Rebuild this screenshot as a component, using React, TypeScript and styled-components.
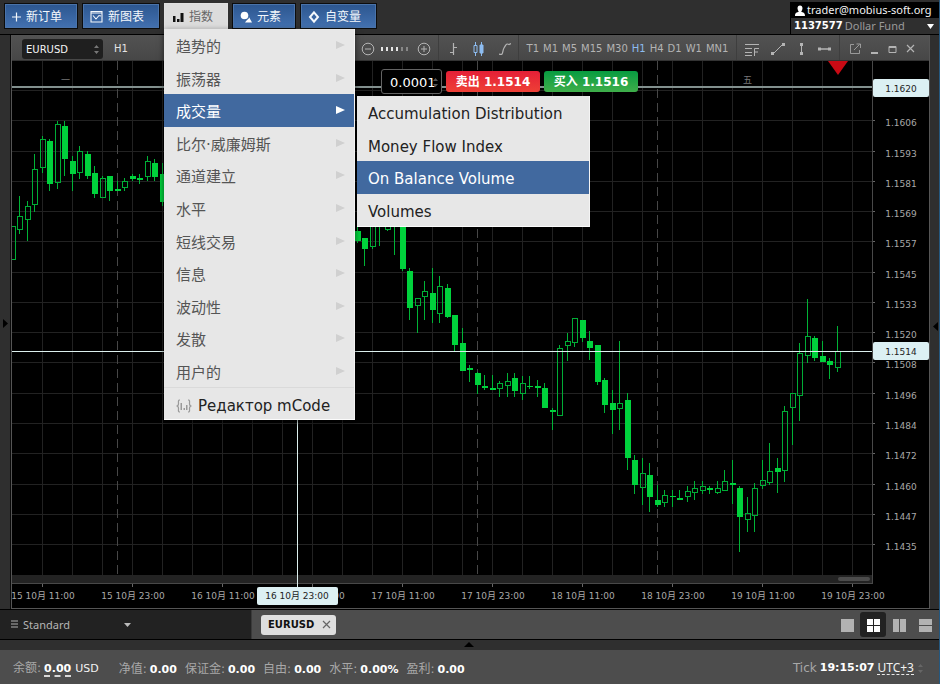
import React from "react";
import styled, { createGlobalStyle, css } from "styled-components";

const wide = `"DejaVu Sans", "Noto Sans CJK SC", sans-serif`;
const narrow = `"Noto Sans", "Noto Sans CJK SC", sans-serif`;

const GlobalStyle = createGlobalStyle`
  * { box-sizing: border-box; }
  html, body { margin: 0; background: #2f2f2f; }
  body { font-family: ${wide}; }
  button, input, select { font-family: inherit; margin: 0; }
  svg { display: block; flex: none; }
`;

const Page = styled.div`
  display: flex;
  flex-direction: column;
  height: 100vh;
  min-height: 480px;
  overflow: hidden;
  border-right: 1px solid #25587f;
  background: #2f2f2f;
`;

/* ---------- header ---------- */

const Header = styled.header`
  display: flex;
  align-items: flex-start;
  height: 35px;
  padding: 3px 0 0 4px;
  border-bottom: 1px solid #000;
  gap: 4px;
`;

const NavSlot = styled.div`
  position: relative;
`;

const NavButton = styled.button<{ $active?: boolean; $width: number }>`
  display: flex;
  align-items: center;
  gap: 5px;
  width: ${(p) => p.$width}px;
  height: 26px;
  padding: 1px 0 0 7px;
  border: 1px solid #0c0c0c;
  box-shadow: inset 0 0 0 1px #4a73a9;
  background: linear-gradient(#2c568f, #4371b0);
  color: #f4f8fc;
  font-size: 12px;
  line-height: 16px;
  white-space: nowrap;
  ${(p) =>
    p.$active &&
    css`
      border-color: #e0e0e0;
      background: #dcdcdc;
      box-shadow: none;
      color: #666;
    `}
`;

const Account = styled.section`
  margin: -1px 0 0 auto;
  width: 149px;
  border-left: 1px solid #000;
  font-family: ${narrow};
  font-size: 11px;
  line-height: 16px;
`;

const AccountUser = styled.div`
  display: flex;
  align-items: center;
  gap: 2px;
  height: 16px;
  padding-left: 4px;
  background: #000;
  color: #f2f2f2;
`;

const AccountFund = styled.button`
  display: flex;
  align-items: center;
  gap: 2px;
  width: 100%;
  height: 16px;
  padding: 0 5px 0 3px;
  border: 0;
  background: none;
  color: #9a9a9a;
  font-family: ${narrow};
  font-size: 11px;
  line-height: 16px;
  b { color: #fff; font-family: ${wide}; font-size: 10px; }
  svg { margin-left: auto; }
`;

/* ---------- menus ---------- */

const Menu = styled.div`
  position: absolute;
  z-index: 5;
  top: 26px;
  left: 0;
  width: 191px;
  background: #e7e7e7;
  border-right: 1px solid #f4f4f4;
  border-bottom: 1px solid #fbfbfb;
  box-shadow: 0 2px 6px rgba(0, 0, 0, 0.6);
`;

const MenuList = styled.ul<{ $height: number }>`
  display: grid;
  grid-auto-rows: 1fr;
  height: ${(p) => p.$height}px;
  margin: 0;
  padding: 0;
  list-style: none;
`;

const MenuRow = styled.li`
  position: relative;
  display: flex;
`;

const MenuButton = styled.button<{ $selected?: boolean; $soft?: boolean }>`
  display: flex;
  flex: 1;
  align-items: center;
  justify-content: space-between;
  padding: 4px 9px 0 12px;
  border: 0;
  background: ${(p) => (p.$selected ? "#41699f" : "transparent")};
  color: ${(p) => (p.$selected ? "#fff" : p.$soft ? "#555" : "#222")};
  font-size: 15px;
  line-height: 20px;
  text-align: left;
  white-space: nowrap;
  svg { margin-top: -4px; }
`;

const SubMenu = styled.div`
  position: absolute;
  top: 2px;
  left: 193px;
  width: 233px;
  background: #e7e7e7;
  border-right: 1px solid #f4f4f4;
  border-bottom: 1px solid #fbfbfb;
`;

const SubButton = styled(MenuButton)`
  padding-left: 11px;
`;

const EditorButton = styled(MenuButton)`
  width: 100%;
  height: 32px;
  justify-content: flex-start;
  gap: 6px;
  border-top: 1px solid #dadada;
  svg { margin-top: 0; }
`;

/* ---------- workspace ---------- */

const Workspace = styled.main`
  display: flex;
  flex: 1;
  min-height: 0;
  border-bottom: 1px solid #000;
`;

const SideHandle = styled.button<{ $side: "left" | "right" }>`
  display: flex;
  align-items: center;
  justify-content: ${(p) => (p.$side === "left" ? "flex-start" : "flex-end")};
  width: ${(p) => (p.$side === "left" ? 11 : 9)}px;
  padding: ${(p) => (p.$side === "left" ? "2px 0 0 3px" : "8px 1px 0 0")};
  border: 0;
  border-right: ${(p) => (p.$side === "left" ? "1px solid #0a0a0a" : "0")};
  background: #2f2f2f;
`;

const ChartPanel = styled.section`
  display: flex;
  flex: 1;
  flex-direction: column;
  min-width: 0;
  border: 1px solid #555;
  border-top: 0;
  background: #000;
`;

const ChartToolbar = styled.div`
  display: flex;
  height: 26px;
  background: linear-gradient(#525252, #474747);
  border-bottom: 1px solid #333;
`;

const SymbolField = styled.label`
  position: relative;
  display: flex;
  align-items: center;
  align-self: center;
  margin: 3px 11px 0 10px;
  width: 81px;
  height: 20px;
  svg { position: absolute; right: 3px; }
`;

const SymbolSelect = styled.select`
  appearance: none;
  width: 100%;
  height: 100%;
  padding: 0 16px 0 4px;
  border: 0;
  border-radius: 3px;
  background: #1f1f1f;
  color: #f5f5f5;
  font-size: 10px;
`;

const FrameLabel = styled.span`
  align-self: center;
  padding-top: 2px;
  color: #e4e4e4;
  font-size: 10px;
`;

const Tools = styled.div<{ $width: number; $first?: boolean; $gap: number; $nudge?: string }>`
  display: flex;
  align-items: center;
  justify-content: center;
  gap: ${(p) => p.$gap}px;
  width: ${(p) => p.$width}px;
  padding: ${(p) => p.$nudge ?? "2px 0 0"};
  margin-left: ${(p) => (p.$first ? "auto" : "0")};
  border-left: ${(p) => (p.$first ? "0" : "1px solid #3e3e3e")};
`;

const ToolButton = styled.button<{ $on?: boolean }>`
  padding: 0;
  border: 0;
  background: none;
  color: ${(p) => (p.$on ? "#8dbcf0" : "#b4b4b4")};
  font-size: 10px;
  line-height: 14px;
`;

const ChartArea = styled.div`
  position: relative;
  flex: 1;
  min-height: 0;
`;

const ChartSvg = styled.svg`
  width: 100%;
  height: 100%;
  font-family: ${wide};
`;

const Trade = styled.div`
  position: absolute;
  top: 8px;
  left: 369px;
  display: flex;
  align-items: center;
  gap: 4px;
`;

const VolumeField = styled.label`
  position: relative;
  display: flex;
  align-items: center;
  svg { position: absolute; right: 3px; }
`;

const VolumeInput = styled.input`
  width: 61px;
  height: 25px;
  padding: 1px 0 0 8px;
  border: 1px solid #636363;
  border-radius: 3px;
  background: #000;
  color: #fff;
  font-size: 13px;
`;

const DealButton = styled.button<{ $buy?: boolean }>`
  width: 94px;
  height: 21px;
  padding: 1px 0 0;
  border: 0;
  border-radius: 3px;
  background: ${(p) =>
    p.$buy ? "linear-gradient(#079c41, #3fae4a)" : "linear-gradient(#e51f37, #ee4036)"};
  color: #fff;
  font-size: 12px;
  font-weight: 700;
  line-height: 20px;
  white-space: nowrap;
`;

/* ---------- bottom bars ---------- */

const TabBar = styled.div`
  display: flex;
  height: 30px;
  border-bottom: 1px solid #000;
  background: #4d4d4d;
`;

const LayoutPicker = styled.button`
  display: flex;
  align-items: center;
  width: 252px;
  padding: 0 0 0 11px;
  border: 0;
  border-right: 1px solid #3a3a3a;
  background: #222;
  color: #b5b5b5;
  font-family: ${narrow};
  font-size: 11px;
  span { width: 105px; padding-left: 4px; text-align: left; }
`;

const ChartTab = styled.div`
  display: flex;
  align-items: center;
  justify-content: space-between;
  align-self: center;
  width: 75px;
  height: 20px;
  margin-left: 9px;
  padding: 0 5px 0 7px;
  border-radius: 3px;
  background: #dedede;
  color: #111;
  font-size: 10px;
  font-weight: 700;
`;

const PlainButton = styled.button`
  padding: 0;
  border: 0;
  background: none;
`;

const Grids = styled.div`
  display: flex;
  align-items: center;
  margin-left: auto;
  padding: 0 1px 0 0;
`;

const GridButton = styled.button<{ $on?: boolean }>`
  display: flex;
  align-items: center;
  justify-content: center;
  width: 26px;
  height: 25px;
  padding: 2px 0 0;
  border: 0;
  border-radius: 3px;
  background: ${(p) => (p.$on ? "#222" : "transparent")};
  color: ${(p) => (p.$on ? "#fff" : "#b2b2b2")};
`;

const Drawer = styled.button`
  display: flex;
  justify-content: center;
  height: 10px;
  padding: 2px 2px 0 0;
  border: 0;
  background: #2f2f2f;
`;

const Status = styled.footer`
  display: flex;
  align-items: center;
  height: 34px;
  padding: 1px 15px 0 13px;
  background: #4d4d4d;
  color: #a8a8a8;
  font-size: 12px;
  white-space: nowrap;
`;

const Metric = styled.div<{ $gap: number }>`
  display: flex;
  align-items: baseline;
  gap: 3px;
  margin-right: ${(p) => p.$gap}px;
  b { color: #fff; font-size: 11px; font-weight: 700; line-height: 12px; }
  small { color: #f2f2f2; font-size: 11px; margin-left: 1px; }
`;

const Dashed = styled.b`
  border-bottom: 2px dashed #d8d8d8;
`;

const Clock = styled.div`
  display: flex;
  align-items: center;
  gap: 3px;
  margin-left: auto;
  b { color: #fff; font-size: 11px; font-weight: 700; }
`;

const Zone = styled.button`
  display: flex;
  align-items: center;
  padding: 0;
  border: 0;
  border-bottom: 1px dashed #e8e8e8;
  background: none;
  color: #f2f2f2;
  font-family: ${narrow};
  font-size: 12px;
  line-height: 13px;
`;

/* ---------- icons ---------- */

type TriProps = { w: number; h: number; dir: "up" | "down" | "left" | "right"; color: string };
function Triangle({ w, h, dir, color }: TriProps) {
  const pts = {
    up: `0,${h} ${w},${h} ${w / 2},0`,
    down: `0,0 ${w},0 ${w / 2},${h}`,
    left: `${w},0 ${w},${h} 0,${h / 2}`,
    right: `0,0 ${w},${h / 2} 0,${h}`,
  }[dir];
  return (
    <svg width={w} height={h} aria-hidden="true">
      <polygon points={pts} fill={color} />
    </svg>
  );
}

function Spinner({ color = "#777" }: { color?: string }) {
  return (
    <svg width="7" height="12" aria-hidden="true">
      <path d="M1 5L3.5 2L6 5zM1 8L3.5 11L6 8z" fill={color} />
    </svg>
  );
}

const Stroke = ({ w = 14, h = 14, children }: { w?: number; h?: number; children: React.ReactNode }) => (
  <svg width={w} height={h} viewBox={`0 0 ${w} ${h}`} fill="none" stroke="currentColor" aria-hidden="true">
    {children}
  </svg>
);

const PlusIcon = () => <Stroke w={9} h={10}><path d="M4.5 .5v9M0 5h9" strokeWidth="1.2" /></Stroke>;
const ChartIcon = () => (
  <Stroke w={13} h={13}>
    <path d="M1 1.5h11v10.500h-11z" strokeWidth="1.1" />
    <path d="M3 5.500l3 3.500L9 5.500l2 .5M1 3h11" strokeWidth="1.1" />
  </Stroke>
);
const BarsIcon = () => (
  <svg width="12" height="12" aria-hidden="true">
    <path d="M1 5h2.500v6H1zM5 8h2.500v3H5zM8.500 2h3v9h-3z" fill="#111" />
  </svg>
);
const ElementIcon = () => (
  <svg width="12" height="13" aria-hidden="true">
    <circle cx="4.500" cy="5.500" r="3.800" fill="#fff" />
    <path d="M9 7l3 5.500H5z" fill="#fff" />
    <path d="M4.500 10c2 .5 4-1 4.500-3" fill="none" stroke="#39659f" strokeWidth="1" />
  </svg>
);
const DiamondIcon = () => (
  <Stroke w={12} h={14}><path d="M6 2.300L10 7L6 11.700L2 7z" strokeWidth="2" /></Stroke>
);
const UserIcon = () => (
  <svg width="10" height="11" aria-hidden="true">
    <path d="M5 0.500c1.700 0 2.500 1.200 2.500 2.700S6.400 6.200 6.200 6.800c1.800.5 3.800 1 3.800 4.200H0c0-3.200 2-3.700 3.800-4.200C3.600 6.200 2.500 4.700 2.500 3.200S3.300.5 5 .5z" fill="#fff" />
  </svg>
);
const CodeIcon = () => (
  <svg width="16" height="14" aria-hidden="true">
    <path d="M4 1H3.500C2 1 2.500 3 2.500 4.500S2 7 .5 7C2 7 2.500 8 2.500 9.500S2 13 3.500 13H4M12 1h.5C14 1 13.500 3 13.500 4.500S14 7 15.500 7C14 7 13.500 8 13.500 9.500S14 13 12.500 13H12" fill="none" stroke="#999" strokeWidth="1.200" />
    <path d="M4.500 4H6v7H4.500zM7.500 9H9v2H7.500zM10 6h1.500v5H10z" fill="#999" />
  </svg>
);
const CloseIcon = ({ size = 9, color = "currentColor" }: { size?: number; color?: string }) => (
  <svg width={size} height={size} viewBox="0 0 9 9" aria-hidden="true">
    <path d="M1 1l7 7M8 1l-7 7" stroke={color} strokeWidth="1.200" />
  </svg>
);

const CircleIcon = ({ plus }: { plus?: boolean }) => (
  <Stroke>
    <circle cx="7" cy="7" r="5.800" />
    <path d={plus ? "M4 7h6M7 4v6" : "M4 7h6"} />
  </Stroke>
);
const ScaleIcon = () => (
  <svg width="32" height="6" aria-hidden="true">
    {[0, 1, 2, 3, 4, 5].map((i) => (
      <rect key={i} x={1 + i * 5} y="1" width="2" height="4" fill={i < 4 ? "#e6e6e6" : "#888"} />
    ))}
  </svg>
);
const BarTypeIcon = () => <Stroke w={8}><path d="M3.500 1v12M0 10.500h3.500M3.500 5.500h3.500" strokeWidth="1.200" /></Stroke>;
const CandleIcon = () => (
  <Stroke w={11}>
    <path d="M2.500 0v3M2.500 11v3M1 3.500h3v7H1zM8.500 0v14" />
    <path d="M7 3h3v8H7z" fill="currentColor" />
  </Stroke>
);
const LineIcon = () => <Stroke w={12}><path d="M0 12c5 2 3-3 5-6s2-5 5-3.500l2-1" strokeWidth="1.200" /></Stroke>;
const FibIcon = () => (
  <Stroke><path d="M0 2.500h14M0 6.500h7M0 10.500h7M0 13.500h7M9.500 14V6.500H14M9.500 10h3.500" /></Stroke>
);
const TrendIcon = () => (
  <Stroke w={14}><path d="M2 12L12 2" /><path d="M0 10h3v3H0zM11 1h3v3h-3z" fill="currentColor" stroke="none" /></Stroke>
);
const VerticalIcon = () => (
  <Stroke w={9}><path d="M4.500 2v10" /><path d="M3 1h3v3H3zM3 10h3v3H3z" fill="currentColor" stroke="none" /></Stroke>
);
const HorizontalIcon = () => (
  <Stroke w={13}><path d="M2 7h10" strokeWidth="1.500" /><path d="M0 5.500h3v3H0zM10 5.500h3v3h-3z" fill="currentColor" stroke="none" /></Stroke>
);
const PopoutIcon = () => (
  <Stroke w={11} h={12}><path d="M4 1.500H.5v9H9.500V7M4 7l5.500-5.500M6.500 1h4v4" opacity=".75" /></Stroke>
);
const MinIcon = () => <Stroke w={9} h={10}><path d="M1 9h7" strokeWidth="2" /></Stroke>;
const MaxIcon = () => <Stroke w={9} h={10}><path d="M1 3h7" strokeWidth="2" /><path d="M1 2.500h7v6H1z" /></Stroke>;

const gridPaths = [
  "M0 0h13v13H0z",
  "M0 0h6v6H0zM7 0h6v6H7zM0 7h6v6H0zM7 7h6v6H7z",
  "M0 0h6v13H0zM7 0h6v13H7z",
  "M0 0h13v6H0zM0 7h13v6H0z",
];

/* ---------- chart ---------- */

// [x, high, body top, body bottom, low, falling]
type Candle = [number, number, number, number, number, 0 | 1];
const candles: Candle[] = [
  [12.5, 226, 226, 259, 259, 0], [20, 196, 216, 229, 234, 0], [27.5, 201, 206, 219, 241, 0],
  [35, 154, 169, 204, 212, 0], [42.5, 136, 139, 167, 173, 0], [50, 139, 141, 184, 191, 1],
  [57.5, 121, 124, 182, 189, 0], [65, 121, 126, 159, 176, 1], [72.5, 156, 161, 174, 191, 1],
  [80, 146, 151, 172, 179, 0], [87.5, 151, 154, 176, 179, 1], [95, 166, 173, 194, 198, 1],
  [102.5, 176, 178, 197, 197, 0], [110, 176, 176, 191, 201, 1], [117.5, 181, 189, 191, 191, 1],
  [125, 178, 181, 187, 191, 0], [132.5, 174, 176, 179, 181, 1], [140, 174, 178, 180, 184, 1],
  [147.5, 156, 161, 176, 181, 0], [155, 159, 163, 177, 181, 1], [162.5, 163, 174, 202, 206, 1],
  [357.5, 226, 231, 241, 243, 1], [365, 238, 238, 249, 266, 1], [372.5, 200, 200, 246, 249, 0],
  [380, 200, 224, 226, 246, 1], [387.5, 200, 210, 229, 231, 0], [395, 200, 200, 222, 255, 1],
  [402.5, 200, 200, 269, 271, 1], [410, 268, 271, 308, 320, 1], [417.5, 298, 298, 305, 333, 0],
  [425, 281, 291, 296, 320, 0], [432.5, 268, 293, 310, 323, 1], [440, 276, 286, 313, 323, 0],
  [447.5, 284, 288, 317, 318, 1], [455, 315, 315, 345, 352, 1], [462.5, 328, 343, 371, 371, 1],
  [470, 365, 368, 370, 382, 1], [477.5, 372, 373, 385, 394, 1], [485, 375, 386, 388, 390, 1],
  [492.5, 375, 388, 390, 390, 1], [500, 381, 383, 388, 397, 0], [507.5, 373, 381, 385, 397, 0],
  [515, 373, 378, 391, 397, 1], [522.5, 376, 383, 393, 400, 0], [530, 376, 386, 387, 389, 1],
  [537.5, 380, 386, 388, 397, 1], [545, 383, 388, 408, 408, 1], [552.5, 408, 410, 412, 430, 1],
  [560, 345, 348, 415, 415, 0], [567.5, 333, 341, 345, 361, 0], [575, 318, 318, 342, 347, 0],
  [582.5, 320, 320, 338, 342, 1], [590, 331, 341, 348, 360, 1], [597.5, 345, 345, 382, 385, 1],
  [605, 378, 380, 405, 413, 1], [612.5, 390, 403, 410, 434, 1], [620, 341, 403, 408, 430, 0],
  [627.5, 393, 400, 458, 470, 1], [635, 455, 460, 485, 494, 1], [642.5, 458, 473, 487, 505, 0],
  [650, 463, 475, 497, 512, 1], [657.5, 485, 500, 505, 507, 1], [665, 490, 495, 502, 507, 0],
  [672.5, 490, 496, 497, 507, 1], [680, 490, 498, 500, 500, 1], [687.5, 486, 491, 496, 502, 0],
  [695, 481, 488, 492, 500, 0], [702.5, 481, 486, 490, 494, 0], [710, 486, 488, 490, 494, 1],
  [717.5, 481, 488, 492, 494, 0], [725, 470, 481, 490, 490, 0], [732.5, 460, 483, 485, 504, 1],
  [740, 486, 488, 517, 552, 1], [747.5, 497, 513, 519, 532, 0], [755, 483, 488, 515, 532, 0],
  [762.5, 460, 480, 485, 489, 0], [770, 443, 471, 482, 485, 0], [777.5, 458, 468, 472, 493, 1],
  [785, 406, 411, 470, 482, 0], [792.5, 393, 393, 407, 445, 0], [800, 343, 353, 395, 421, 0],
  [807.5, 299, 336, 355, 363, 0], [815, 336, 338, 358, 361, 1], [822.5, 341, 356, 362, 362, 1],
  [830, 358, 361, 365, 379, 1], [837.5, 326, 351, 367, 372, 0],
];

const prices = [
  "1.1620", "1.1606", "1.1593", "1.1581", "1.1569", "1.1557", "1.1545", "1.1533",
  "1.1520", "1.1508", "1.1496", "1.1484", "1.1472", "1.1460", "1.1447", "1.1435",
];
const times = [
  "15 10月 11:00", "15 10月 23:00", "16 10月 11:00", "16 10月 23:00", "17 10月 11:00",
  "17 10月 23:00", "18 10月 11:00", "18 10月 23:00", "19 10月 11:00", "19 10月 23:00",
];

const rowY = (i: number) => Math.round(91 + i * 30.27);

function PriceTag({ y, value }: { y: number; value: string }) {
  return (
    <g>
      <rect x="873" y={y - 9} width="56" height="18" rx="2" fill="#dcf0f3" />
      <text x="901" y={y + 4} fill="#222" fontSize="9" textAnchor="middle">{value}</text>
    </g>
  );
}

function PriceChart() {
  return (
    <ChartSvg viewBox="12 61 917 547" preserveAspectRatio="xMaxYMin slice" role="img" aria-label="EURUSD H1">
      <g shapeRendering="crispEdges">
        {Array.from({ length: 28 }, (_, i) => (
          <rect key={i} x={42 + i * 30} y="61" width="1" height="515" fill="#222" />
        ))}
        {prices.map((p, i) => (
          <rect key={p} x="12" y={rowY(i) - 1} width="860" height="1" fill="#222" />
        ))}
        {[117, 477, 657].map((x) => (
          <path key={x} d={`M${x + 0.5} 61V576`} stroke="#474747" strokeDasharray="9 5" />
        ))}
        {candles.map(([x, high, top, bottom, low, falling]) => {
          const left = Math.round(x - 2.6);
          return (
            <g key={x}>
              <rect x={left + 2} y={high} width="1" height={top - high} fill="#00b336" />
              <rect x={left + 2} y={bottom} width="1" height={low - bottom} fill="#00b336" />
              {falling ? (
                <rect x={left} y={top} width="6" height={Math.max(bottom - top, 1)} fill="#00d23c" />
              ) : (
                <rect x={left + 0.5} y={top + 0.5} width="5" height={bottom - top} fill="none" stroke="#00ad36" />
              )}
            </g>
          );
        })}
        <rect x="12" y="86" width="861" height="2" fill="#82908e" />
        <rect x="12" y="351" width="861" height="1" fill="#dcefed" />
        <rect x="12" y="575" width="860" height="9" fill="#232323" />
        <rect x="12" y="583" width="861" height="1" fill="#484848" />
        <rect x="872" y="61" width="1" height="523" fill="#484848" />
        {prices.map((p, i) => (
          <rect key={p} x="873" y={rowY(i) - 1} width="2" height="1" fill="#666" />
        ))}
        {times.map((t, i) => (
          <rect key={t} x={42 + i * 90} y="584" width="1" height="3" fill="#666" />
        ))}
        <rect x="297" y="61" width="1" height="527" fill="#dcefed" />
      </g>
      <rect x="838" y="577" width="32" height="4" rx="2" fill="#4c4c4c" />
      <polygon points="828,61 848,61 838,75" fill="#c90a14" />
      <g fill="#777" fontSize="9">
        <text x="61" y="83">一</text>
        <text x="743" y="83">五</text>
      </g>
      <g fill="#a8a8a8" fontSize="9" textAnchor="middle">
        {prices.map((p, i) => (i === 0 ? null : <text key={p} x="901" y={rowY(i) + 5}>{p}</text>))}
        {times.map((t, i) => (
          <text key={t} x={43 + i * 90} y="599">{t}</text>
        ))}
      </g>
      <PriceTag y={88} value="1.1620" />
      <PriceTag y={351} value="1.1514" />
      <rect x="257" y="587" width="81" height="18" rx="2" fill="#dcf0f3" />
      <text x="297" y="599" fill="#222" fontSize="9" textAnchor="middle">16 10月 23:00</text>
    </ChartSvg>
  );
}

/* ---------- page ---------- */

const groups = [
  "趋势的", "振荡器", "成交量", "比尔·威廉姆斯", "通道建立", "水平",
  "短线交易", "信息", "波动性", "发散", "用户的",
];
const volumeIndicators = ["Accumulation Distribution", "Money Flow Index", "On Balance Volume", "Volumes"];
const frames = ["T1", "M1", "M5", "M15", "M30", "H1", "H4", "D1", "W1", "MN1"];

function IndicatorMenu() {
  return (
    <Menu>
      <MenuList $height={358}>
        {groups.map((name) => {
          const open = name === "成交量";
          return (
            <MenuRow key={name}>
              <MenuButton $soft $selected={open} aria-expanded={open}>
                {name}
                <Triangle w={9} h={8} dir="right" color={open ? "#fff" : "#d0d0d0"} />
              </MenuButton>
              {open && (
                <SubMenu>
                  <MenuList $height={130}>
                    {volumeIndicators.map((item) => (
                      <MenuRow key={item}>
                        <SubButton $selected={item === "On Balance Volume"}>{item}</SubButton>
                      </MenuRow>
                    ))}
                  </MenuList>
                </SubMenu>
              )}
            </MenuRow>
          );
        })}
      </MenuList>
      <EditorButton><CodeIcon />Редактор mCode</EditorButton>
    </Menu>
  );
}

export default function App() {
  return (
    <Page>
      <GlobalStyle />
      <Header>
        <NavButton $width={74}><PlusIcon />新订单</NavButton>
        <NavButton $width={78}><ChartIcon />新图表</NavButton>
        <NavSlot>
          <NavButton $width={64} $active aria-expanded><BarsIcon />指数</NavButton>
          <IndicatorMenu />
        </NavSlot>
        <NavButton $width={64}><ElementIcon />元素</NavButton>
        <NavButton $width={77}><DiamondIcon />自变量</NavButton>
        <Account>
          <AccountUser><UserIcon />trader@mobius-soft.org</AccountUser>
          <AccountFund>
            <b>1137577</b>Dollar Fund
            <Triangle w={7} h={5} dir="down" color="#fff" />
          </AccountFund>
        </Account>
      </Header>

      <Workspace>
        <SideHandle $side="left" aria-label="Show left panel">
          <Triangle w={5} h={9} dir="right" color="#000" />
        </SideHandle>
        <ChartPanel>
          <ChartToolbar>
            <SymbolField>
              <SymbolSelect aria-label="Symbol" defaultValue="EURUSD"><option>EURUSD</option></SymbolSelect>
              <Spinner />
            </SymbolField>
            <FrameLabel>H1</FrameLabel>
            <Tools $width={83} $gap={5} $first $nudge="2px 2px 0 0">
              <ToolButton aria-label="Zoom out"><CircleIcon /></ToolButton>
              <ScaleIcon />
              <ToolButton aria-label="Zoom in"><CircleIcon plus /></ToolButton>
            </Tools>
            <Tools $width={80} $gap={15} $nudge="2px 0 0 4px">
              <ToolButton aria-label="Bars"><BarTypeIcon /></ToolButton>
              <ToolButton aria-label="Candles" $on><CandleIcon /></ToolButton>
              <ToolButton aria-label="Line"><LineIcon /></ToolButton>
            </Tools>
            <Tools $width={218} $gap={4}>
              {frames.map((f) => <ToolButton key={f} $on={f === "H1"}>{f}</ToolButton>)}
            </Tools>
            <Tools $width={103} $gap={12}>
              <ToolButton aria-label="Fibonacci"><FibIcon /></ToolButton>
              <ToolButton aria-label="Trend line"><TrendIcon /></ToolButton>
              <ToolButton aria-label="Vertical line"><VerticalIcon /></ToolButton>
              <ToolButton aria-label="Horizontal line"><HorizontalIcon /></ToolButton>
            </Tools>
            <Tools $width={90} $gap={9} $nudge="2px 4px 0 0">
              <ToolButton aria-label="Pop out"><PopoutIcon /></ToolButton>
              <ToolButton aria-label="Minimize"><MinIcon /></ToolButton>
              <ToolButton aria-label="Maximize"><MaxIcon /></ToolButton>
              <ToolButton aria-label="Close"><CloseIcon /></ToolButton>
            </Tools>
          </ChartToolbar>
          <ChartArea>
            <PriceChart />
            <Trade>
              <VolumeField>
                <VolumeInput aria-label="Volume" defaultValue="0.0001" />
                <Spinner color="#555" />
              </VolumeField>
              <DealButton>卖出 1.1514</DealButton>
              <DealButton $buy>买入 1.1516</DealButton>
            </Trade>
          </ChartArea>
        </ChartPanel>
        <SideHandle $side="right" aria-label="Show right panel">
          <Triangle w={5} h={9} dir="left" color="#000" />
        </SideHandle>
      </Workspace>

      <TabBar>
        <LayoutPicker>
          <svg width="8" height="9" aria-hidden="true">
            <path d="M0 1h7M0 4h7M0 7h7" stroke="#b0b0b0" />
          </svg>
          <span>Standard</span>
          <Triangle w={7} h={4} dir="down" color="#bbb" />
        </LayoutPicker>
        <ChartTab>
          EURUSD
          <PlainButton aria-label="Close EURUSD"><CloseIcon size={9} color="#666" /></PlainButton>
        </ChartTab>
        <Grids>
          {gridPaths.map((d, i) => (
            <GridButton key={d} $on={i === 1} aria-label={`Layout ${i + 1}`}>
              <svg width="13" height="13" aria-hidden="true"><path d={d} fill="currentColor" /></svg>
            </GridButton>
          ))}
        </Grids>
      </TabBar>
      <Drawer aria-label="Show journal"><Triangle w={10} h={5} dir="up" color="#000" /></Drawer>
      <Status>
        <Metric $gap={20}>余额: <Dashed>0.00</Dashed><small>USD</small></Metric>
        <Metric $gap={8}>净值: <b>0.00</b></Metric>
        <Metric $gap={8}>保证金: <b>0.00</b></Metric>
        <Metric $gap={8}>自由: <b>0.00</b></Metric>
        <Metric $gap={8}>水平: <b>0.00%</b></Metric>
        <Metric $gap={0}>盈利: <b>0.00</b></Metric>
        <Clock>
          Tick <b>19:15:07</b>
          <Zone>UTC+3</Zone>
          <Spinner color="#666" />
        </Clock>
      </Status>
    </Page>
  );
}
